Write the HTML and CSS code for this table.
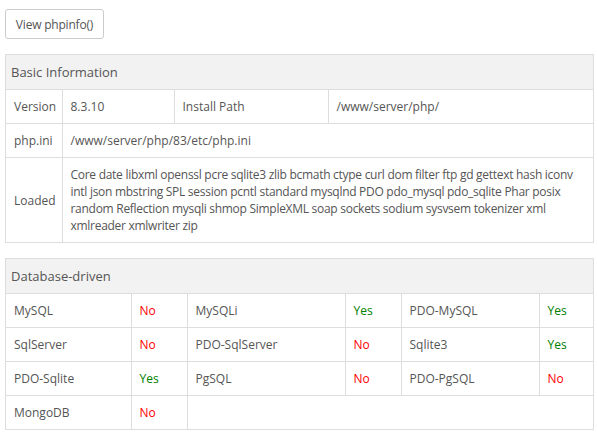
FILE: index.html
```html
<!DOCTYPE html>
<html>
<head>
<meta charset="utf-8">
<link rel="stylesheet" href="styles.css">
</head>
<body>
<div class="page">
  <div class="toolbar"><button class="btn">View phpinfo()</button></div>

  <div class="panel">
    <div class="panel-head">Basic Information</div>
    <table class="tbl basic">
      <colgroup><col style="width:56px"><col style="width:112px"><col style="width:154px"><col></colgroup>
      <tr><td>Version</td><td>8.3.10</td><td>Install Path</td><td>/www/server/php/</td></tr>
      <tr><td>php.ini</td><td colspan="3">/www/server/php/83/etc/php.ini</td></tr>
      <tr><td>Loaded</td><td colspan="3" class="loaded">Core date libxml openssl pcre sqlite3 zlib bcmath ctype curl dom filter ftp gd gettext hash iconv intl json mbstring SPL session pcntl standard mysqlnd PDO pdo_mysql pdo_sqlite Phar posix random Reflection mysqli shmop SimpleXML soap sockets sodium sysvsem tokenizer xml xmlreader xmlwriter zip</td></tr>
    </table>
  </div>

  <div class="panel">
    <div class="panel-head">Database-driven</div>
    <table class="tbl db">
      <colgroup><col style="width:125px"><col style="width:56px"><col style="width:158px"><col style="width:56px"><col style="width:138px"><col></colgroup>
      <tr><td>MySQL</td><td class="no">No</td><td>MySQLi</td><td class="yes">Yes</td><td>PDO-MySQL</td><td class="yes">Yes</td></tr>
      <tr><td>SqlServer</td><td class="no">No</td><td>PDO-SqlServer</td><td class="no">No</td><td>Sqlite3</td><td class="yes">Yes</td></tr>
      <tr><td>PDO-Sqlite</td><td class="yes">Yes</td><td>PgSQL</td><td class="no">No</td><td>PDO-PgSQL</td><td class="no">No</td></tr>
      <tr><td>MongoDB</td><td class="no">No</td><td colspan="4"></td></tr>
    </table>
  </div>
</div>
</body>
</html>
```

FILE: styles.css
```css
html, body {
  margin: 0;
  padding: 0;
  background: #fff;
}
body {
  font-family: "Open Sans", "Noto Sans", sans-serif;
  font-size: 12px;
  color: #555;
}
.page {
  padding: 9px 3px 0 5px;
}
.toolbar {
  margin-bottom: 15px;
}
.btn {
  font-family: inherit;
  font-size: 12px;
  color: #555;
  background: #fff;
  border: 1px solid #ccc;
  border-radius: 3px;
  height: 30px;
  width: 99px;
  padding: 0;
  display: block;
  letter-spacing: -0.2px;
}
.panel {
  border: 1px solid #ddd;
  margin-bottom: 15px;
}
.panel-head {
  background: #f2f2f2;
  height: 34px;
  line-height: 34px;
  padding-left: 5px;
  font-size: 13px;
  color: #555;
}
.tbl {
  width: 100%;
  border-collapse: collapse;
  table-layout: fixed;
}
.tbl td {
  border-top: 1px solid #ddd;
  border-left: 1px solid #ddd;
  padding: 8px 8px;
  line-height: 17px;
  height: 17px;
  vertical-align: middle;
}
.tbl td:first-child {
  border-left: none;
}
.loaded {
  padding-top: 8px;
  padding-bottom: 9px;
  letter-spacing: -0.28px;
  padding-right: 4px !important;
}
.no { color: #ff0000; }
.yes { color: #008000; }
```
